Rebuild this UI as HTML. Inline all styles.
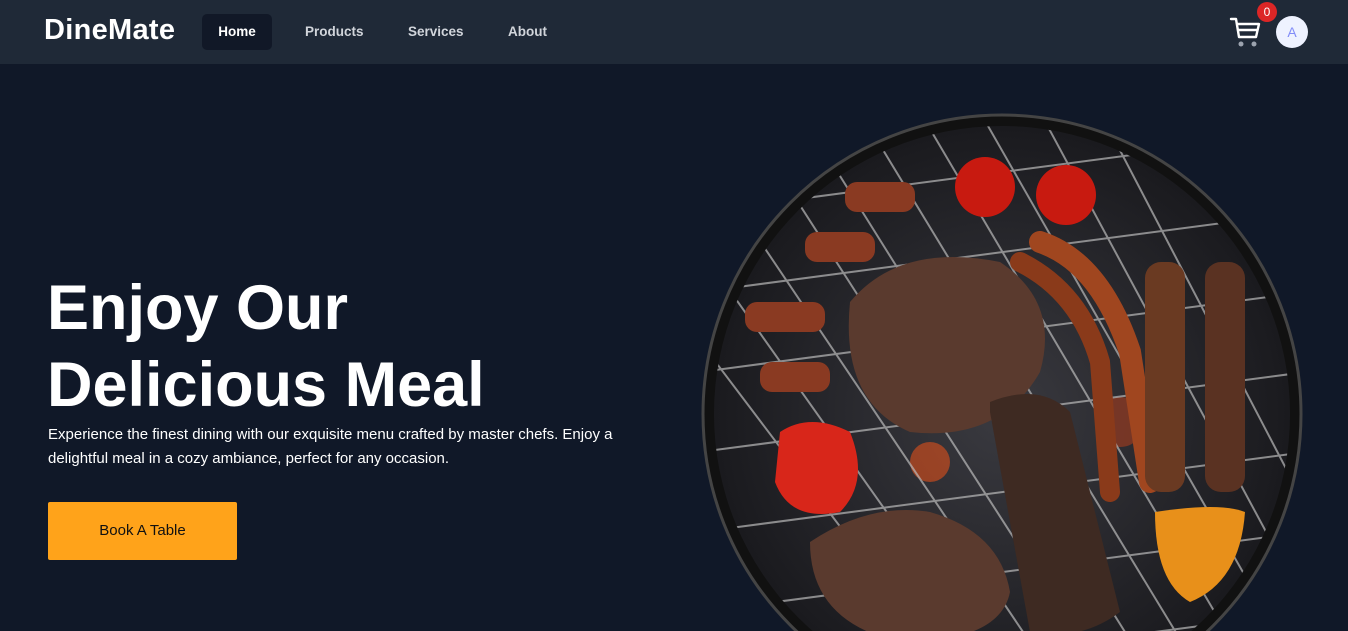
<!DOCTYPE html>
<html><head><meta charset="utf-8"><style>
*{margin:0;padding:0;box-sizing:border-box}
html,body{width:1348px;height:631px;overflow:hidden}
body{background:#101828;font-family:"Liberation Sans",sans-serif;position:relative}
nav{position:absolute;left:0;top:0;width:1348px;height:64px;background:#1f2937}
.logo{position:absolute;left:44px;top:14px;color:#fff;font-size:29px;font-weight:bold;letter-spacing:0.3px}
.nl{position:absolute;top:24px;font-size:13.5px;font-weight:bold;color:#d1d5db}
.home{position:absolute;left:202px;top:14px;width:70px;height:36px;background:#111827;border-radius:5px;color:#fff;font-size:13.5px;font-weight:bold;text-align:center;line-height:36px}
.badge{position:absolute;left:1257px;top:2px;width:20px;height:20px;border-radius:50%;background:#dc2626;color:#fff;font-size:12px;text-align:center;line-height:20px}
.av{position:absolute;left:1276px;top:16px;width:32px;height:32px;border-radius:50%;background:#eef2ff;color:#818cf8;font-size:14px;text-align:center;line-height:32px}
h1{position:absolute;left:47px;top:270px;color:#fff;font-size:63px;line-height:77px;font-weight:bold}
p{position:absolute;left:48px;top:423px;width:610px;color:#fff;font-size:15px;line-height:24px}
.btn{position:absolute;left:48px;top:502px;width:189px;height:58px;background:#ffa31a;color:#111;font-size:15px;text-align:center;line-height:58px;border-radius:2px}
</style></head><body>
<nav>
<div class="logo">DineMate</div>
<div class="home">Home</div>
<div class="nl" style="left:305px">Products</div>
<div class="nl" style="left:408px">Services</div>
<div class="nl" style="left:508px">About</div>
<svg style="position:absolute;left:1229px;top:17px" width="34" height="32" viewBox="0 0 34 32" fill="none" stroke="#fff" stroke-width="2.4" stroke-linecap="round" stroke-linejoin="round"><path d="M2 2h5l3 18h17l3-13H8"/><path d="M9 13h19"/><circle cx="12" cy="27" r="2.5" fill="#9ca3af" stroke="none"/><circle cx="25" cy="27" r="2.5" fill="#9ca3af" stroke="none"/></svg>
<div class="badge">0</div>
<div class="av">A</div>
</nav>
<h1>Enjoy Our<br>Delicious Meal</h1>
<p>Experience the finest dining with our exquisite menu crafted by master chefs. Enjoy a delightful meal in a cozy ambiance, perfect for any occasion.</p>
<div class="btn">Book A Table</div>
<svg style="position:absolute;left:700px;top:112px" width="606" height="519" viewBox="0 0 606 519">
<defs><clipPath id="c"><circle cx="302" cy="302" r="288"/></clipPath>
<radialGradient id="g"><stop offset="0" stop-color="#3a3a40"/><stop offset="1" stop-color="#1a1a1e"/></radialGradient></defs>
<circle cx="302" cy="302" r="299" fill="#111" stroke="#444" stroke-width="3"/>
<circle cx="302" cy="302" r="288" fill="url(#g)"/>
<g clip-path="url(#c)">
<circle cx="230" cy="350" r="20" fill="#e0501a" opacity=".6"/><circle cx="420" cy="310" r="25" fill="#c0401a" opacity=".5"/>
<g stroke="#bbb" stroke-width="2" opacity=".7">
<path d="M0 40 L350 560 M40 0 L400 560 M100 0 L450 560 M160 0 L500 560 M220 0 L550 560 M280 0 L600 560 M340 0 L620 520 M400 0 L640 460 M-40 80 L300 560 M-60 150 L250 560"/>
<path d="M0 100 L606 20 M0 180 L606 100 M0 260 L606 180 M0 340 L606 260 M0 420 L606 340 M0 500 L606 420 M0 580 L606 500"/>
</g>
<path d="M150 190 Q200 130 300 150 Q360 190 340 260 Q300 330 210 320 Q140 290 150 190Z" fill="#5a3a2e"/>
<path d="M110 430 Q170 390 230 400 Q300 420 310 480 Q300 530 200 530 Q110 510 110 430Z" fill="#5a3a2e"/>
<path d="M290 290 Q340 270 370 300 L420 500 Q380 530 330 520 L290 300Z" fill="#3e2a22"/>
<path d="M340 130 Q400 150 430 240 L450 370" stroke="#a0461f" stroke-width="22" fill="none" stroke-linecap="round"/>
<path d="M320 150 Q380 180 400 250 L410 380" stroke="#8a3a1a" stroke-width="20" fill="none" stroke-linecap="round"/>
<rect x="445" y="150" width="40" height="230" rx="16" fill="#6a3a22"/>
<rect x="505" y="150" width="40" height="230" rx="16" fill="#5a3222"/>
<circle cx="285" cy="75" r="30" fill="#c81a10"/><circle cx="366" cy="83" r="30" fill="#c81a10"/>
<path d="M80 320 Q110 300 150 320 Q170 370 140 400 Q90 410 75 370Z" fill="#d8261a"/>
<path d="M455 400 Q520 390 545 400 Q540 470 490 490 Q455 470 455 400Z" fill="#e8901a"/>
<g fill="#8a3a22"><rect x="145" y="70" width="70" height="30" rx="12"/><rect x="105" y="120" width="70" height="30" rx="12"/><rect x="45" y="190" width="80" height="30" rx="12"/><rect x="60" y="250" width="70" height="30" rx="12"/></g>
</g>
</svg>
</body></html>
